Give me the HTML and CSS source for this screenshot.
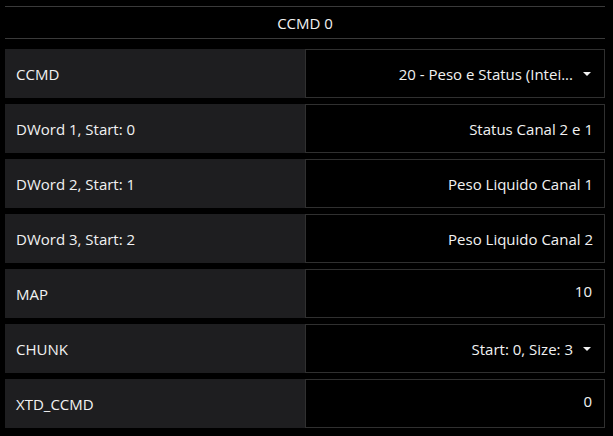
FILE: index.html
```html
<!DOCTYPE html>
<html lang="pt">
<head>
<meta charset="utf-8">
<title>CCMD 0</title>
<link rel="stylesheet" href="styles.css">
</head>
<body>
<div class="panel">
  <div class="header">CCMD 0</div>
  <div class="rows">
    <div class="row">
      <div class="label">CCMD</div>
      <div class="value select"><span class="text">20 - Peso e Status (Intei...</span><span class="caret"></span></div>
    </div>
    <div class="row">
      <div class="label">DWord 1, Start: 0</div>
      <div class="value"><span class="text">Status Canal 2 e 1</span></div>
    </div>
    <div class="row">
      <div class="label">DWord 2, Start: 1</div>
      <div class="value"><span class="text">Peso Liquido Canal 1</span></div>
    </div>
    <div class="row">
      <div class="label">DWord 3, Start: 2</div>
      <div class="value"><span class="text">Peso Liquido Canal 2</span></div>
    </div>
    <div class="row">
      <div class="label">MAP</div>
      <div class="value input"><span class="text">10</span></div>
    </div>
    <div class="row">
      <div class="label">CHUNK</div>
      <div class="value select"><span class="text">Start: 0, Size: 3</span><span class="caret"></span></div>
    </div>
    <div class="row">
      <div class="label">XTD_CCMD</div>
      <div class="value input"><span class="text">0</span></div>
    </div>
  </div>
</div>
</body>
</html>
```

FILE: styles.css
```css
html, body {
  margin: 0;
  padding: 0;
  background: #000;
}
body {
  font-family: "Open Sans", "Noto Sans", sans-serif;
  font-size: 15px;
  color: #f2f2f2;
}
.panel {
  width: 600px;
  padding: 6px 8px 0 5px;
}
.header {
  height: 31px;
  border-top: 1px solid #3a3a3a;
  border-bottom: 1px solid #3a3a3a;
  display: flex;
  align-items: center;
  justify-content: center;
  margin-bottom: 10px;
}
.rows {
  display: grid;
  row-gap: 6px;
}
.row {
  display: grid;
  grid-template-columns: 300px 300px;
  height: 49px;
}
.label {
  background: #1e1e20;
  display: flex;
  align-items: center;
  padding-left: 11px;
}
.value {
  border: 1px solid #303030;
  background: #000;
  display: flex;
  align-items: center;
  justify-content: flex-end;
  padding-right: 11px;
}
.select {
  padding-right: 13px;
}
.input .text {
  position: relative;
  top: -3px;
  padding-right: 1px;
}
.caret {
  width: 0;
  height: 0;
  border-left: 4px solid transparent;
  border-right: 4px solid transparent;
  border-top: 4px solid #f2f2f2;
  margin-left: 10px;
}
```
